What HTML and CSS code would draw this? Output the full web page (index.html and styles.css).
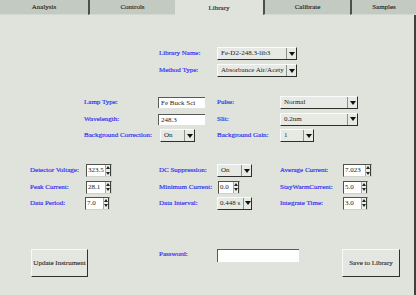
FILE: index.html
```html
<!DOCTYPE html>
<html>
<head>
<meta charset="utf-8">
<link rel="stylesheet" href="styles.css">
</head>
<body>
<div class="tabs">
  <div class="tab t-analysis">Analysis</div>
  <div class="tab t-controls sep">Controls</div>
  <div class="tab t-library active">Library</div>
  <div class="tab t-calibrate sep">Calibrate</div>
  <div class="tab t-samples sep">Samples</div>
</div>
<div class="panel">
  <div class="grid g1">
    <span class="lbl c3">Library Name:</span>
    <div class="select c4 w80"><span class="val">Fe-D2-248.3-lib3</span><span class="btn"><svg width="6" height="4" viewBox="0 0 6 4"><path d="M0 0H6L3 4Z"/></svg></span></div>
    <span class="lbl c3">Method Type:</span>
    <div class="select c4 w80"><span class="val">Absorbance Air/Acety</span><span class="btn"><svg width="6" height="4" viewBox="0 0 6 4"><path d="M0 0H6L3 4Z"/></svg></span></div>
  </div>

  <div class="grid g2">
    <span class="lbl c2">Lamp Type:</span>
    <div class="field c3 w47">Fe Buck Sci</div>
    <span class="lbl c4">Pulse:</span>
    <div class="select c5 w78"><span class="val">Normal</span><span class="btn"><svg width="6" height="4" viewBox="0 0 6 4"><path d="M0 0H6L3 4Z"/></svg></span></div>

    <span class="lbl c2">Wavelength:</span>
    <div class="field c3 w47">248.3</div>
    <span class="lbl c4">Slit:</span>
    <div class="select c5 w78"><span class="val">0.2nm</span><span class="btn"><svg width="6" height="4" viewBox="0 0 6 4"><path d="M0 0H6L3 4Z"/></svg></span></div>

    <span class="lbl c2">Background Correction:</span>
    <div class="select c3 w35 ml2"><span class="val">On</span><span class="btn"><svg width="6" height="4" viewBox="0 0 6 4"><path d="M0 0H6L3 4Z"/></svg></span></div>
    <span class="lbl c4">Background Gain:</span>
    <div class="select c5 w34"><span class="val">1</span><span class="btn"><svg width="6" height="4" viewBox="0 0 6 4"><path d="M0 0H6L3 4Z"/></svg></span></div>
  </div>

  <div class="grid g3">
    <span class="lbl c1">Detector Voltage:</span>
    <div class="spin c2 w26 ml2"><span class="val">323.5</span><span class="arrows"><svg width="4" height="3" viewBox="0 0 4 3"><path d="M0 3H4L2 0Z"/></svg><svg width="4" height="3" viewBox="0 0 4 3"><path d="M0 0H4L2 3Z"/></svg></span></div>
    <span class="lbl c3">DC Suppression:</span>
    <div class="select c4 w35"><span class="val">On</span><span class="btn"><svg width="6" height="4" viewBox="0 0 6 4"><path d="M0 0H6L3 4Z"/></svg></span></div>
    <span class="lbl c5">Average Current:</span>
    <div class="spin c6 w29"><span class="val">7.023</span><span class="arrows"><svg width="4" height="3" viewBox="0 0 4 3"><path d="M0 3H4L2 0Z"/></svg><svg width="4" height="3" viewBox="0 0 4 3"><path d="M0 0H4L2 3Z"/></svg></span></div>

    <span class="lbl c1">Peak Current:</span>
    <div class="spin c2 w26 ml2"><span class="val">28.1</span><span class="arrows"><svg width="4" height="3" viewBox="0 0 4 3"><path d="M0 3H4L2 0Z"/></svg><svg width="4" height="3" viewBox="0 0 4 3"><path d="M0 0H4L2 3Z"/></svg></span></div>
    <span class="lbl c3">Minimum Current:</span>
    <div class="spin c4 w22 ml1"><span class="val">0.0</span><span class="arrows"><svg width="4" height="3" viewBox="0 0 4 3"><path d="M0 3H4L2 0Z"/></svg><svg width="4" height="3" viewBox="0 0 4 3"><path d="M0 0H4L2 3Z"/></svg></span></div>
    <span class="lbl c5">StayWarmCurrent:</span>
    <div class="spin c6 w25"><span class="val">5.0</span><span class="arrows"><svg width="4" height="3" viewBox="0 0 4 3"><path d="M0 3H4L2 0Z"/></svg><svg width="4" height="3" viewBox="0 0 4 3"><path d="M0 0H4L2 3Z"/></svg></span></div>

    <span class="lbl c1">Data Period:</span>
    <div class="spin c2 w25 ml1"><span class="val">7.0</span><span class="arrows"><svg width="4" height="3" viewBox="0 0 4 3"><path d="M0 3H4L2 0Z"/></svg><svg width="4" height="3" viewBox="0 0 4 3"><path d="M0 0H4L2 3Z"/></svg></span></div>
    <span class="lbl c3">Data Interval:</span>
    <div class="select c4 w35 tight"><span class="val">0.448 s</span><span class="btn"><svg width="6" height="4" viewBox="0 0 6 4"><path d="M0 0H6L3 4Z"/></svg></span></div>
    <span class="lbl c5">Integrate Time:</span>
    <div class="spin c6 w25"><span class="val">3.0</span><span class="arrows"><svg width="4" height="3" viewBox="0 0 4 3"><path d="M0 3H4L2 0Z"/></svg><svg width="4" height="3" viewBox="0 0 4 3"><path d="M0 0H4L2 3Z"/></svg></span></div>
  </div>

  <div class="grid g4">
    <button class="button b-update">Update Instrument</button>
    <span class="lbl c3 pw">Password:</span>
    <div class="field c4 w82 pwfield"></div>
    <button class="button b-save">Save to Library</button>
  </div>
</div>
</body>
</html>
```

FILE: styles.css
```css
html, body {
  margin: 0;
  padding: 0;
}
body {
  width: 416px;
  height: 295px;
  overflow: hidden;
  background: #e0e3dc;
  font-family: "Liberation Serif", "Times New Roman", serif;
  font-size: 7px;
  color: #222;
}
.tabs {
  display: flex;
  height: 15px;
}
.tab {
  box-sizing: border-box;
  display: flex;
  align-items: center;
  justify-content: center;
  background: #c3cac1;
  color: #2a2a2a;
  font-size: 7px;
  border-bottom: 1px solid #d4d8d2;
  -webkit-text-stroke: 0.15px #2a2a2a;
}
.tab.sep {
  border-left: 2px solid #4b5149;
}
.tab.active {
  background: #e0e3dc;
  border-bottom: none;
}
.t-analysis { width: 88px; }
.t-controls { width: 87px; }
.t-library { width: 88px; }
.t-calibrate { width: 87px; }
.t-samples { width: 66px; }

.panel {
  box-sizing: border-box;
  height: 280px;
  border-right: 2px solid #3d423c;
  padding: 30px 0 0 30px;
}
.grid {
  display: grid;
  grid-template-columns: 54px 74px 59px 63px 63px auto;
  align-items: center;
}
.g1 { grid-template-rows: 17px 17px; }
.g2 { grid-template-rows: 17px 16px 17px; margin-top: 15px; }
.g3 { grid-template-rows: 17px 16px 16px; margin-top: 18px; }
.g4 { grid-template-rows: 28px; margin-top: 36px; align-items: start; }

.c1 { grid-column: 1; }
.c2 { grid-column: 2; }
.c3 { grid-column: 3; }
.c4 { grid-column: 4; }
.c5 { grid-column: 5; }
.c6 { grid-column: 6; }

.lbl {
  color: #3535f2;
  white-space: nowrap;
  line-height: 9px;
  -webkit-text-stroke: 0.2px #3535f2;
}
.g1 .lbl.c3, .g3 .lbl.c3 { margin-left: 1px; }

.ml1 { margin-left: 1px; }
.ml2 { margin-left: 2px; }

.w22 { width: 22px; }
.w25 { width: 25px; }
.w26 { width: 26px; }
.w29 { width: 29px; }
.w34 { width: 34px; }
.w35 { width: 35px; }
.w47 { width: 47px; }
.w78 { width: 78px; }
.w80 { width: 80px; }
.w82 { width: 82px; }

.select {
  box-sizing: border-box;
  display: flex;
  height: 13px;
  background: #e7e9e5;
  border: 1px solid;
  border-color: #fbfbfb #2c302b #2c302b #fbfbfb;
}
.select .val {
  flex: 1;
  min-width: 0;
  overflow: hidden;
  white-space: nowrap;
  padding-left: 3px;
  line-height: 11px;
  color: #222;
}
.select.tight .val {
  padding-left: 2px;
}
.select .btn {
  box-sizing: border-box;
  width: 10px;
  border-left: 1px solid #8c918a;
  display: flex;
  align-items: center;
  justify-content: center;
}
.select.tight .btn {
  width: 8px;
}
.select .btn svg { display: block; fill: #111; }

.spin {
  box-sizing: border-box;
  display: flex;
  height: 13px;
  background: #fff;
  border: 1px solid;
  border-color: #4d524c #cfd2cc #cfd2cc #4d524c;
}
.spin .val {
  flex: 1;
  min-width: 0;
  overflow: hidden;
  white-space: nowrap;
  padding-left: 1px;
  line-height: 11px;
  color: #222;
}
.spin .arrows {
  box-sizing: border-box;
  width: 6px;
  background: #eceeea;
  border-left: 1px solid #a3a8a1;
  border-right: 1px solid #3a3f39;
  display: flex;
  flex-direction: column;
  align-items: center;
  justify-content: space-around;
}
.spin .arrows svg { display: block; fill: #222; }

.field {
  box-sizing: border-box;
  height: 11px;
  background: #fff;
  border-top: 1px solid #565b55;
  border-left: 1px solid #565b55;
  padding-left: 2px;
  line-height: 10px;
  white-space: nowrap;
  color: #222;
}
.pwfield {
  height: 13px;
  margin-top: 2px;
}
.pw {
  margin-top: 3px;
  margin-left: 1px;
}

.button {
  box-sizing: border-box;
  height: 28px;
  padding: 0;
  margin: 2px 0 0 0;
  background: #e4e6e2;
  border: 1px solid;
  border-color: #f8f8f8 #2e322d #2e322d #f8f8f8;
  font-family: "Liberation Serif", "Times New Roman", serif;
  font-size: 7px;
  color: #333;
  -webkit-text-stroke: 0.15px #333;
  display: flex;
  align-items: center;
  justify-content: center;
  white-space: nowrap;
}
.b-update {
  grid-column: 1 / 3;
  width: 57px;
  margin-left: 1px;
}
.b-save {
  grid-column: 6;
  width: 58px;
  margin-left: -1px;
}
```
